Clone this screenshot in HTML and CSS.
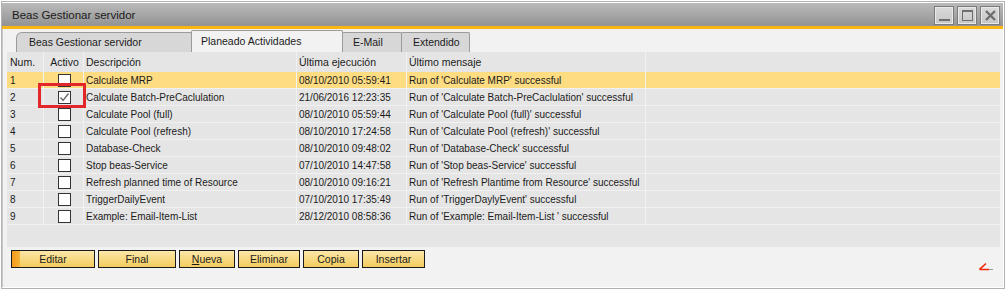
FILE: index.html
```html
<!DOCTYPE html>
<html lang="es">
<head>
  <meta charset="UTF-8" />
  <title>Beas Gestionar servidor</title>
  <link rel="stylesheet" href="styles.css">
</head>
<body>

<div class="window">
  <div class="titlebar">
    <span class="title">Beas Gestionar servidor</span>
    <div class="win-buttons">
      <span class="win-btn"><svg width="17" height="17" viewBox="0 0 17 17"><rect x="3" y="12" width="11" height="2" fill="#6e6e6e"/></svg></span>
      <span class="win-btn"><svg width="17" height="17" viewBox="0 0 17 17"><rect x="3.5" y="3.5" width="10" height="10" fill="none" stroke="#6e6e6e"/><rect x="3" y="3" width="11" height="2" fill="#6e6e6e"/></svg></span>
      <span class="win-btn"><svg width="17" height="17" viewBox="0 0 17 17"><path d="M4 4 L13 13 M13 4 L4 13" stroke="#6e6e6e" stroke-width="2.4"/></svg></span>
    </div>
  </div>
  <div class="accent"></div>

  <div class="content">
    <div class="tabs">
      <div class="tab tab-first">Beas Gestionar servidor</div>
      <div class="tab tab-active">Planeado Actividades</div>
      <div class="tab tab-mail">E-Mail</div>
      <div class="tab tab-ext">Extendido</div>
    </div>

    <div class="grid">
      <div class="row head">
        <div class="cell">Num.</div>
        <div class="cell center">Activo</div>
        <div class="cell">Descripción</div>
        <div class="cell">Última ejecución</div>
        <div class="cell">Último mensaje</div>
        <div class="cell last"></div>
      </div>

      <div class="row selected">
        <div class="cell">1</div>
        <div class="cell center"><span class="check"></span></div>
        <div class="cell">Calculate MRP</div>
        <div class="cell">08/10/2010 05:59:41</div>
        <div class="cell">Run of 'Calculate MRP' successful</div>
        <div class="cell last"></div>
      </div>
      <div class="row">
        <div class="cell">2</div>
        <div class="cell center"><span class="check"><svg width="11" height="11" viewBox="0 0 11 11"><path d="M1.5 5.5 L4 8.5 L9.5 1.5" fill="none" stroke="#6a6a6a" stroke-width="1.4"/></svg></span></div>
        <div class="cell">Calculate Batch-PreCaclulation</div>
        <div class="cell">21/06/2016 12:23:35</div>
        <div class="cell">Run of 'Calculate Batch-PreCaclulation' successful</div>
        <div class="cell last"></div>
      </div>
      <div class="row">
        <div class="cell">3</div>
        <div class="cell center"><span class="check"></span></div>
        <div class="cell">Calculate Pool (full)</div>
        <div class="cell">08/10/2010 05:59:44</div>
        <div class="cell">Run of 'Calculate Pool (full)' successful</div>
        <div class="cell last"></div>
      </div>
      <div class="row">
        <div class="cell">4</div>
        <div class="cell center"><span class="check"></span></div>
        <div class="cell">Calculate Pool (refresh)</div>
        <div class="cell">08/10/2010 17:24:58</div>
        <div class="cell">Run of 'Calculate Pool (refresh)' successful</div>
        <div class="cell last"></div>
      </div>
      <div class="row">
        <div class="cell">5</div>
        <div class="cell center"><span class="check"></span></div>
        <div class="cell">Database-Check</div>
        <div class="cell">08/10/2010 09:48:02</div>
        <div class="cell">Run of 'Database-Check' successful</div>
        <div class="cell last"></div>
      </div>
      <div class="row">
        <div class="cell">6</div>
        <div class="cell center"><span class="check"></span></div>
        <div class="cell">Stop beas-Service</div>
        <div class="cell">07/10/2010 14:47:58</div>
        <div class="cell">Run of 'Stop beas-Service' successful</div>
        <div class="cell last"></div>
      </div>
      <div class="row">
        <div class="cell">7</div>
        <div class="cell center"><span class="check"></span></div>
        <div class="cell">Refresh planned time of Resource</div>
        <div class="cell">08/10/2010 09:16:21</div>
        <div class="cell">Run of 'Refresh Plantime from Resource' successful</div>
        <div class="cell last"></div>
      </div>
      <div class="row">
        <div class="cell">8</div>
        <div class="cell center"><span class="check"></span></div>
        <div class="cell">TriggerDailyEvent</div>
        <div class="cell">07/10/2010 17:35:49</div>
        <div class="cell">Run of 'TriggerDaylyEvent' successful</div>
        <div class="cell last"></div>
      </div>
      <div class="row">
        <div class="cell">9</div>
        <div class="cell center"><span class="check"></span></div>
        <div class="cell">Example: Email-Item-List</div>
        <div class="cell">28/12/2010 08:58:36</div>
        <div class="cell">Run of 'Example: Email-Item-List ' successful</div>
        <div class="cell last"></div>
      </div>

      <div class="highlight-box"></div>
    </div>

    <div class="buttons">
      <button class="btn btn-default">Editar</button>
      <button class="btn btn-final">Final</button>
      <button class="btn btn-nueva"><u>N</u>ueva</button>
      <button class="btn btn-eliminar">Eliminar</button>
      <button class="btn btn-copia">Copia</button>
      <button class="btn btn-insertar">Insertar</button>
      <svg class="corner-mark" width="16" height="10" viewBox="0 0 16 10">
        <path d="M1 8.5 L14 8.5" stroke="#9a9a9a" stroke-width="1"/>
        <path d="M0.5 8.5 L7 2.5 M0.5 8.5 L10 8.5" fill="none" stroke="#f0280a" stroke-width="1.6"/>
      </svg>
    </div>
  </div>
</div>

</body>
</html>
```

FILE: styles.css
```css
* {
  margin: 0; padding: 0; box-sizing: border-box;
  font-family: 'Liberation Sans', Arial, sans-serif;
}
body {
  background: #fff;
  width: 1008px;
  height: 291px;
  overflow: hidden;
}
.window {
  margin: 1px 3px 0 1px;
  border: 1px solid #b2b2b2;
  padding: 1px 1px 1px 0;
  background: #fff;
}
.titlebar {
  height: 23px;
  background: linear-gradient(#bababa, #939393);
  display: flex;
  align-items: center;
  justify-content: space-between;
  padding: 0 3px 0 10px;
}
.title {
  font-size: 11.5px;
  color: #1b1b1b;
}
.win-buttons {
  display: flex;
  gap: 3px;
  padding-top: 1px;
}
.win-btn {
  width: 20px;
  height: 19px;
  border: 1px solid #7c7c7c;
  background: linear-gradient(#dadada, #c6c6c6);
  box-shadow: inset 0 0 0 1px #e9e9e9;
  display: flex;
  align-items: center;
  justify-content: center;
}
.accent {
  height: 3px;
  background: #fab614;
}
.content {
  height: 258px;
  background: #f2f2f2;
  border-left: 1px solid #c8c8c8;
}
.tabs {
  height: 23px;
  display: flex;
  align-items: flex-end;
  padding-left: 13px;
}
.tab {
  height: 20px;
  border: 1px solid #9b9b9b;
  border-bottom: 0;
  border-radius: 2px 2px 0 0;
  background: #d7d7d7;
  font-size: 10.5px;
  color: #1b1b1b;
  line-height: 19px;
  padding-left: 12px;
  margin-right: -1px;
}
.tab-first { width: 176px; border-top-left-radius: 6px; }
.tab-active {
  width: 152px;
  height: 22px;
  background: #f2f2f2;
  padding-left: 9px;
  line-height: 21px;
  position: relative;
  z-index: 1;
}
.tab-mail { width: 60px; padding-left: 10px; }
.tab-ext { width: 69px; padding-left: 11px; }

.grid {
  position: relative;
  margin: 0 3px 0 4px;
  height: 195px;
  background: #e5e5e5;
}
.row {
  display: grid;
  grid-template-columns: 37px 40px 213px 110px 239px 1fr;
  height: 17px;
  border-bottom: 1px solid #f1f1f1;
  font-size: 10px;
  color: #1b1b1b;
}
.row.head {
  height: 20px;
  border-bottom: 0;
  font-size: 10.5px;
}
.row.selected {
  background: #fddc82;
}
.cell {
  border-right: 1px solid #f1f1f1;
  padding-left: 2px;
  display: flex;
  align-items: center;
  white-space: nowrap;
  overflow: hidden;
}
.cell:first-child { padding-left: 3px; }
.cell.center { justify-content: center; padding-left: 2px; }
.cell.last { border-right: 0; }
.check {
  width: 13px;
  height: 13px;
  border: 1px solid #333;
  background: #fff;
  display: flex;
  align-items: center;
  justify-content: center;
}
.highlight-box {
  position: absolute;
  left: 31px;
  top: 31px;
  width: 48px;
  height: 25px;
  border: 3px solid #e3262a;
}

.buttons {
  display: flex;
  gap: 3px;
  margin: 3px 0 0 8px;
  padding-right: 8px;
}
.btn {
  height: 18px;
  border: 1px solid #1a1a1a;
  background: linear-gradient(#fbe7a8, #f4cc5e);
  font-size: 10.5px;
  color: #1b1b1b;
  cursor: pointer;
}
.btn u { text-decoration: underline; }
.btn-default {
  width: 84px;
  background: linear-gradient(90deg, #f29a1a 0, #f5b23a 8px, transparent 8px),
              linear-gradient(#fbe7a8, #f4cc5e);
}
.btn-final { width: 78px; }
.btn-nueva { width: 56px; }
.btn-eliminar { width: 62px; }
.btn-copia { width: 56px; }
.btn-insertar { width: 63px; }
.corner-mark {
  margin: 11px 0 0 auto;
}
```
